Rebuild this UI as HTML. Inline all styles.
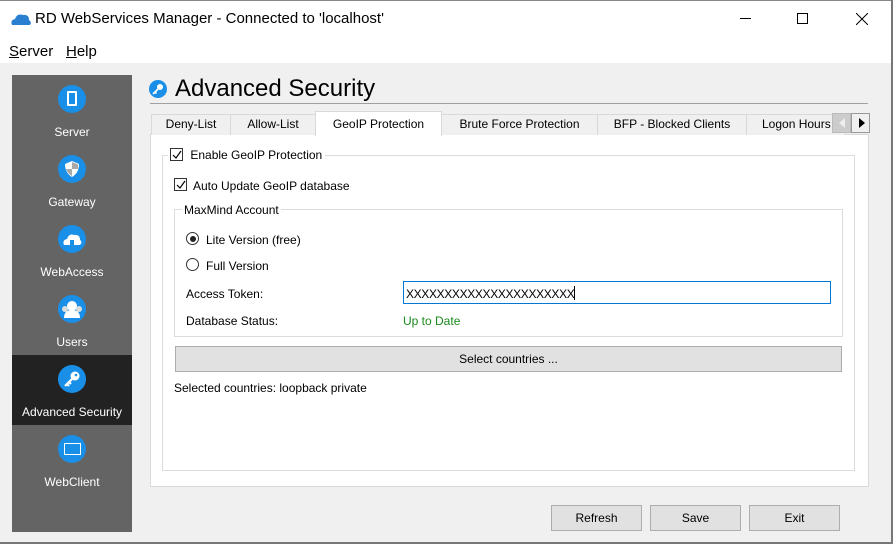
<!DOCTYPE html>
<html><head><style>
*{margin:0;padding:0;box-sizing:border-box}
body{width:893px;height:544px;background:#f0f0f0;font-family:"Liberation Sans",sans-serif;font-size:12px;color:#000;position:relative;overflow:hidden}
.a{position:absolute}
.t{white-space:nowrap}
.tab{position:absolute;top:114px;height:21px;border:1px solid #d9d9d9;border-bottom:none;background:#f0f0f0;text-align:center;line-height:19px;font-size:12px}
.btn{position:absolute;background:#e1e1e1;border:1px solid #adadad;text-align:center;font-size:12px}
.side{position:absolute;left:12px;width:120px;height:70px;color:#fff;text-align:center;font-size:12px}
.ic{position:absolute;left:46px;top:10px;width:28px;height:28px;border-radius:50%;background:#1a8fe8}
.side .l{position:absolute;left:0;right:0;top:50px}
.cb{position:absolute;width:13px;height:13px;border:1px solid #333;background:#fff}
.rb{position:absolute;width:13px;height:13px;border:1px solid #333;border-radius:50%;background:#fff}
</style></head><body>
<div class="a" style="left:0;top:0;width:893px;height:63px;background:#fff"></div>
<div class="a" style="left:0;top:0;width:893px;height:1px;background:#888"></div>
<div class="a" style="right:0;top:0;width:2px;height:544px;background:#777"></div>
<div class="a" style="left:0;bottom:0;width:893px;height:2px;background:#777"></div>
<svg class="a" style="left:10px;top:12px" width="22" height="14"><path d="M2 13 Q0 8 5 7 Q7 1 13 3 Q19 2 19 8 Q22 10 20 13 Z" fill="#2a7fd0"/></svg>
<div class="a t" style="left:35px;top:10px;font-size:15px">RD WebServices Manager - Connected to 'localhost'</div>
<div class="a" style="left:740px;top:18px;width:11px;height:1px;background:#000"></div>
<div class="a" style="left:797px;top:13px;width:11px;height:11px;border:1px solid #000"></div>
<svg class="a" style="left:856px;top:13px" width="12" height="12"><path d="M0 0L12 12M12 0L0 12" stroke="#000"/></svg>
<div class="a t" style="left:9px;top:43px;font-size:15px"><u>S</u>erver</div>
<div class="a t" style="left:66px;top:43px;font-size:15px"><u>H</u>elp</div>

<div class="a" style="left:12px;top:75px;width:120px;height:457px;background:#646464"></div>
<div class="a" style="left:12px;top:355px;width:120px;height:70px;background:#222"></div>
<div class="side" style="top:75px"><div class="ic"><div class="a" style="left:9px;top:6px;width:10px;height:15px;border:2px solid #fff;border-radius:1px"></div></div><div class="l">Server</div></div>
<div class="side" style="top:145px"><div class="ic"><svg class="a" style="left:7px;top:6px" width="14" height="16"><path d="M7 0L14 3Q14 12 7 16Q0 12 0 3Z" fill="#fff"/><path d="M7 1L13 3.5V8H7Z" fill="#aaa"/><path d="M1 8H7V15Q2 12 1 8Z" fill="#aaa"/></svg></div><div class="l">Gateway</div></div>
<div class="side" style="top:215px"><div class="ic"><svg class="a" style="left:4px;top:7px" width="20" height="14"><path d="M2 13Q0 8 5 7Q7 1 12 3Q18 2 18 8Q21 10 18 13Z" fill="#fff"/><rect x="8" y="8" width="4" height="5" fill="#1a8fe8"/></svg></div><div class="l">WebAccess</div></div>
<div class="side" style="top:285px"><div class="ic"><svg class="a" style="left:3px;top:4px" width="22" height="20"><circle cx="11" cy="7" r="5" fill="#fff"/><path d="M3 19Q3 11 11 11Q19 11 19 19Z" fill="#fff"/><circle cx="4" cy="10" r="3" fill="#ddd"/><circle cx="18" cy="10" r="3" fill="#ddd"/></svg></div><div class="l">Users</div></div>
<div class="side" style="top:355px"><div class="ic"><svg class="a" style="left:5px;top:5px" width="18" height="18"><circle cx="12" cy="6" r="4.5" fill="#fff"/><circle cx="13" cy="5" r="1.3" fill="#1a8fe8"/><path d="M9 9L2 16M4 14L6 16M6 12L8 14" stroke="#fff" stroke-width="2.2"/></svg></div><div class="l">Advanced Security</div></div>
<div class="side" style="top:425px"><div class="ic"><div class="a" style="left:6px;top:8px;width:17px;height:12px;border:1.5px solid #fff"></div></div><div class="l">WebClient</div></div>

<div class="a" style="left:149px;top:80px;width:18px;height:18px;border-radius:50%;background:#1a8fe8"><svg class="a" style="left:3px;top:3px" width="12" height="12"><circle cx="8" cy="4" r="3" fill="#fff"/><path d="M6 6L1 11M3 9L4.5 10.5" stroke="#fff" stroke-width="1.6"/></svg></div>
<div class="a t" style="left:175px;top:75px;font-size:24px">Advanced Security</div>
<div class="a" style="left:150px;top:103px;width:718px;height:1px;background:#a0a0a0"></div>

<div class="a" style="left:150px;top:134px;width:719px;height:353px;background:#fff;border:1px solid #d9d9d9"></div>
<div class="tab" style="left:151px;width:80px">Deny-List</div>
<div class="tab" style="left:230px;width:86px">Allow-List</div>
<div class="tab" style="left:315px;top:111px;height:25px;width:127px;background:#fff;line-height:24px;z-index:2">GeoIP Protection</div>
<div class="tab" style="left:441px;width:157px">Brute Force Protection</div>
<div class="tab" style="left:597px;width:150px">BFP - Blocked Clients</div>
<div class="tab" style="left:746px;width:100px;text-align:left;padding-left:15px;overflow:hidden">Logon Hours</div>
<div class="a" style="left:832px;top:113px;width:19px;height:20px;background:#ccc;border:1px solid #bbb"><svg class="a" style="left:5px;top:4px" width="8" height="10"><path d="M7 0V10L1 5Z" fill="#eee"/></svg></div>
<div class="a" style="left:851px;top:113px;width:19px;height:20px;background:#f0f0f0;border:1px solid #999"><svg class="a" style="left:6px;top:4px" width="8" height="10"><path d="M1 0V10L7 5Z" fill="#000"/></svg></div>

<div class="a" style="left:162px;top:155px;width:693px;height:316px;border:1px solid #dcdcdc"></div>
<div class="a t" style="left:168px;top:148px;background:#fff;padding:0 3px 0 2px;height:16px"><span style="display:inline-block;width:13px"></span> <span style="padding-left:4px">Enable GeoIP Protection</span></div>
<div class="cb" style="left:170px;top:148px"><svg class="a" style="left:1px;top:1px" width="10" height="10"><path d="M1 5L4 8L9 1" stroke="#000" fill="none" stroke-width="1.2"/></svg></div>
<div class="cb" style="left:174px;top:178px"><svg class="a" style="left:1px;top:1px" width="10" height="10"><path d="M1 5L4 8L9 1" stroke="#000" fill="none" stroke-width="1.2"/></svg></div>
<div class="a t" style="left:193px;top:179px">Auto Update GeoIP database</div>
<div class="a" style="left:174px;top:209px;width:669px;height:128px;border:1px solid #dcdcdc"></div>
<div class="a t" style="left:182px;top:203px;background:#fff;padding:0 2px">MaxMind Account</div>
<div class="rb" style="left:186px;top:232px"><div class="a" style="left:2.5px;top:2.5px;width:6px;height:6px;border-radius:50%;background:#222"></div></div>
<div class="a t" style="left:206px;top:233px">Lite Version (free)</div>
<div class="rb" style="left:186px;top:258px"></div>
<div class="a t" style="left:206px;top:259px">Full Version</div>
<div class="a t" style="left:186px;top:287px">Access Token:</div>
<div class="a" style="left:403px;top:281px;width:428px;height:23px;border:1px solid #0078d7;padding:4px 2px;font-size:12px;letter-spacing:-0.35px" >XXXXXXXXXXXXXXXXXXXXXX<span style="display:inline-block;width:1px;height:14px;background:#000;vertical-align:-2px"></span></div>
<div class="a t" style="left:186px;top:314px">Database Status:</div>
<div class="a t" style="left:403px;top:314px;color:#1a8a1a">Up to Date</div>
<div class="btn" style="left:175px;top:346px;width:667px;height:26px;line-height:25px">Select countries ...</div>
<div class="a t" style="left:174px;top:381px">Selected countries: loopback private</div>

<div class="btn" style="left:551px;top:505px;width:91px;height:26px;line-height:25px">Refresh</div>
<div class="btn" style="left:650px;top:505px;width:91px;height:26px;line-height:25px">Save</div>
<div class="btn" style="left:749px;top:505px;width:91px;height:26px;line-height:25px">Exit</div>
</body></html>
